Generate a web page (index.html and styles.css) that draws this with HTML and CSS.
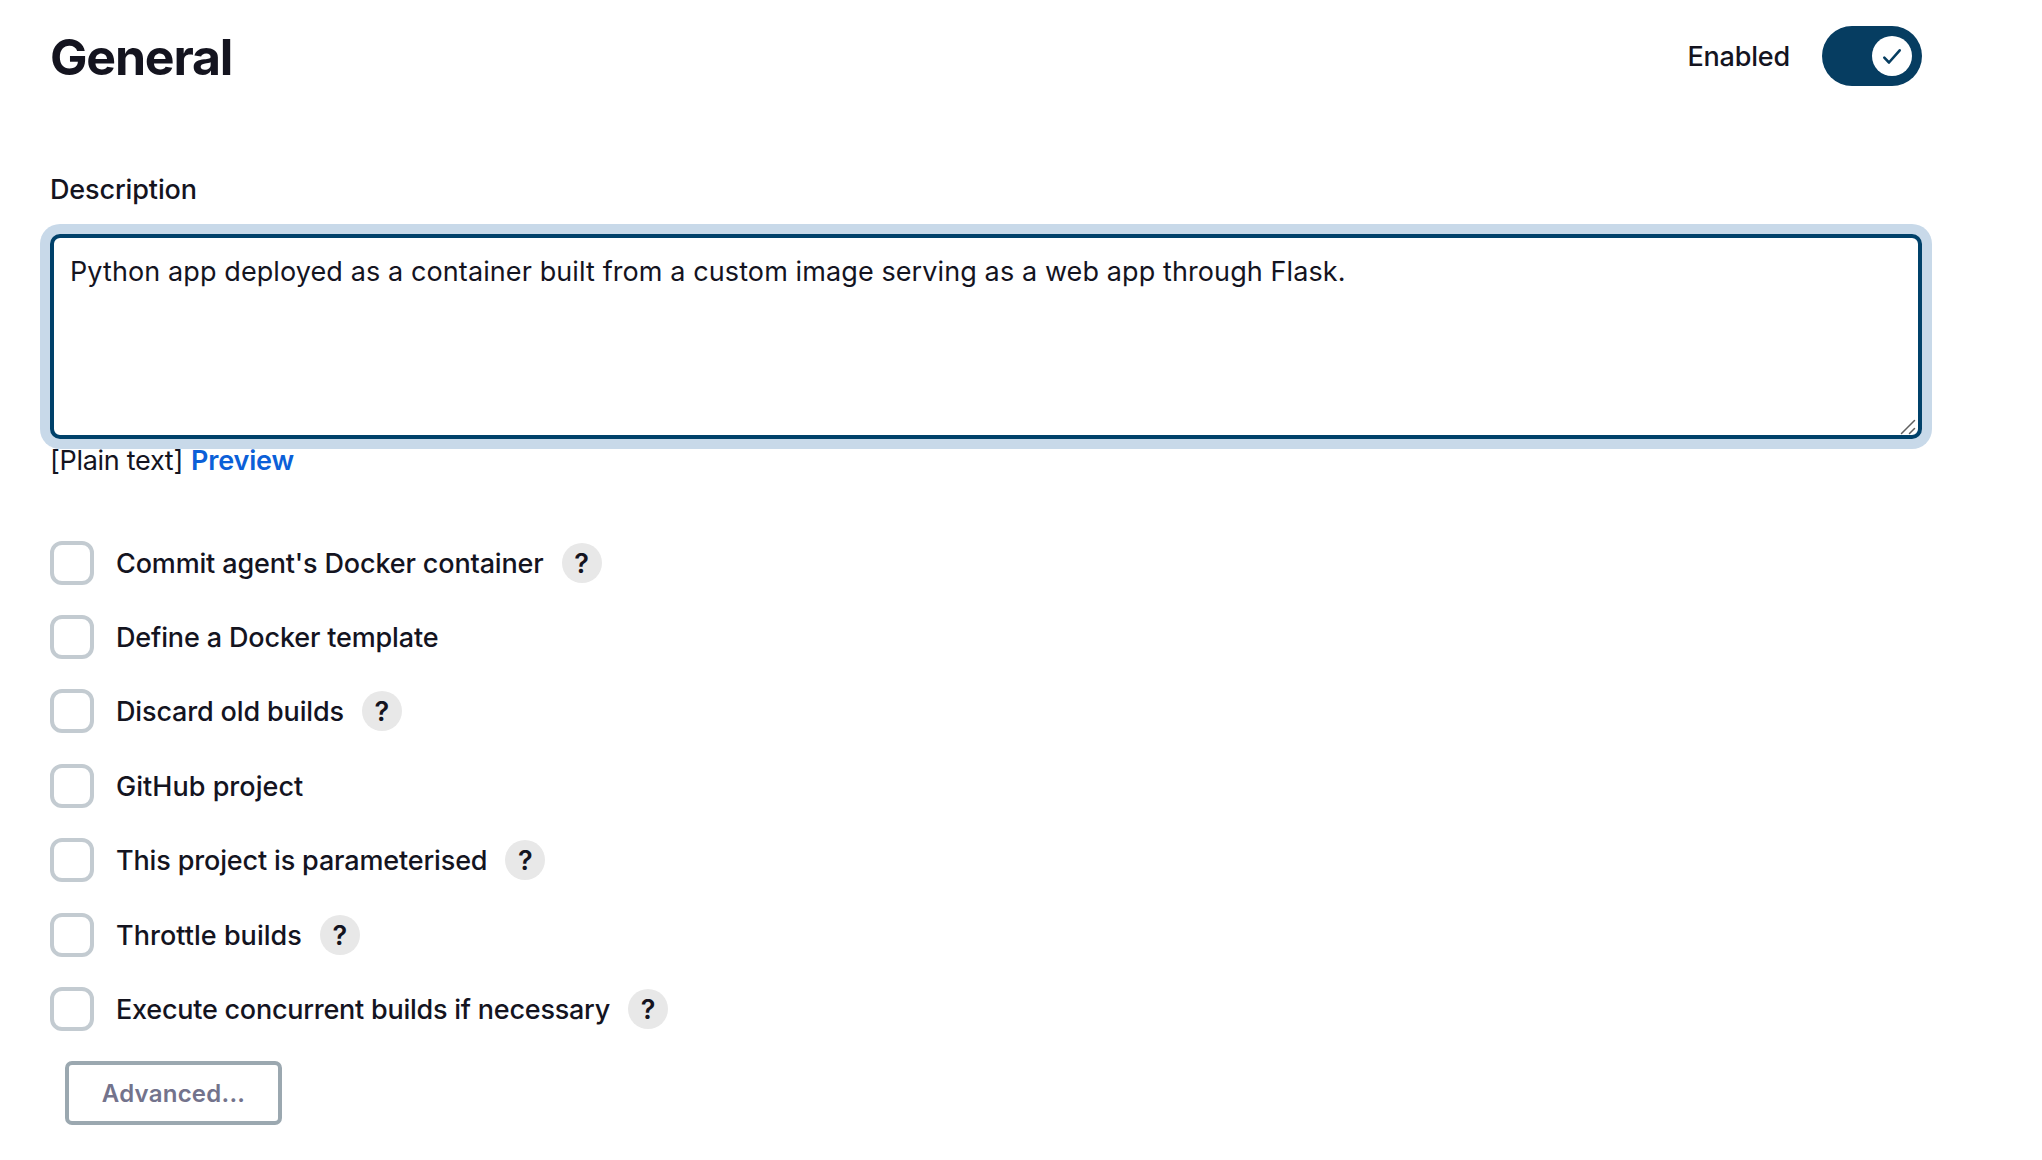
FILE: index.html
```html
<!DOCTYPE html>
<html lang="en">
<head>
<meta charset="utf-8">
<title>General</title>
<link rel="stylesheet" href="styles.css">
</head>
<body>
<main class="page">
  <header class="header">
    <h1 class="title">General</h1>
    <label class="enabled">
      <span class="enabled-text">Enabled</span>
      <span class="toggle"><span class="knob"><svg class="check" viewBox="0 0 40 40"><path d="M12.3 21.7 17 26.5 27.7 14.3"/></svg></span></span>
    </label>
  </header>
  <div class="field">
    <label class="field-label" for="description">Description</label>
    <div class="editor">
      <textarea class="description" id="description" spellcheck="false">Python app deployed as a container built from a custom image serving as a web app through Flask.</textarea>
      <svg class="grip" viewBox="0 0 16 16"><path d="M1.5 14.5 14.5 1.5M9.5 14.5 14.5 9.5"/></svg>
    </div>
    <div class="format"><span class="plain">[Plain text]</span><a class="preview">Preview</a></div>
  </div>
  <ul class="options">
    <li class="option"><span class="box"></span><span class="name">Commit agent's Docker container</span><span class="help">?</span></li>
    <li class="option"><span class="box"></span><span class="name">Define a Docker template</span></li>
    <li class="option"><span class="box"></span><span class="name">Discard old builds</span><span class="help">?</span></li>
    <li class="option"><span class="box"></span><span class="name name-wide">GitHub project</span></li>
    <li class="option"><span class="box"></span><span class="name">This project is parameterised</span><span class="help">?</span></li>
    <li class="option"><span class="box"></span><span class="name name-wide">Throttle builds</span><span class="help">?</span></li>
    <li class="option"><span class="box"></span><span class="name name-tight">Execute concurrent builds if necessary</span><span class="help">?</span></li>
  </ul>
  <button class="advanced">Advanced...</button>
</main>
</body>
</html>
```
FILE: styles.css
```css
* { box-sizing: border-box; }
body { margin: 0; background: #fff; color: #14141f; font-family: Inter, "Noto Sans", sans-serif; font-size: 27px; line-height: 36px; }
.page { width: 1922px; padding: 26px 0 0 50px; }

.header { display: flex; align-items: center; justify-content: space-between; height: 60px; }
.title { margin: 0; padding-top: 2px; font-size: 50px; line-height: 60px; font-weight: 700; letter-spacing: -1.2px; }
.enabled { display: flex; align-items: center; gap: 32px; }
.enabled-text { padding-top: 2px; font-weight: 450; letter-spacing: -0.2px; }
.toggle { display: flex; justify-content: flex-end; width: 100px; height: 60px; padding: 10px; border-radius: 30px; background: #063d61; }
.knob { width: 40px; height: 40px; border-radius: 50%; background: #fff; }
.check { display: block; width: 40px; height: 40px; fill: none; stroke: #063d61; stroke-width: 2.6; stroke-linecap: round; stroke-linejoin: round; }

.field { padding-top: 86px; }
.field-label { display: block; margin-bottom: 26px; font-weight: 500; letter-spacing: -0.13px; }
.editor { position: relative; width: 1872px; height: 205px; }
.description { display: block; width: 100%; height: 100%; padding: 16px; border: 4px solid #00416a; border-radius: 10px; outline: 0; box-shadow: 0 0 0 10px #c8d9e9; background: #fff; color: inherit; font: inherit; letter-spacing: 0.1px; resize: none; }
.grip { position: absolute; right: 6px; bottom: 4px; width: 16px; height: 16px; fill: none; stroke: #606060; stroke-width: 1.5; stroke-linecap: round; }
.format { display: flex; gap: 8px; padding-top: 4px; }
.plain { letter-spacing: -0.3px; }
.preview { color: #0b60d8; font-weight: 600; letter-spacing: -0.15px; }

.options { display: flex; flex-direction: column; gap: 30.4px; margin: 61.6px 0 0; padding: 0; list-style: none; }
.option { display: flex; align-items: center; height: 44px; }
.box { width: 44px; height: 44px; margin-right: 22px; border: 4px solid #c3cbd1; border-radius: 12px; }
.name { padding-top: 2px; font-weight: 500; letter-spacing: -0.15px; }
.name-wide { letter-spacing: 0.03px; }
.name-tight { letter-spacing: -0.24px; }
.help { width: 40px; height: 40px; margin-left: 18px; border-radius: 50%; background: #e8e8e8; font-size: 27px; font-weight: 600; line-height: 41px; text-align: center; }

.advanced { display: block; width: 217px; height: 64px; margin: 30px 0 0 15px; padding: 2px 0 0; border: 4px solid #9ba8b0; border-radius: 7px; background: #fff; color: #73738c; font: 600 24px/54px Inter, sans-serif; letter-spacing: 0.24px; }
```
